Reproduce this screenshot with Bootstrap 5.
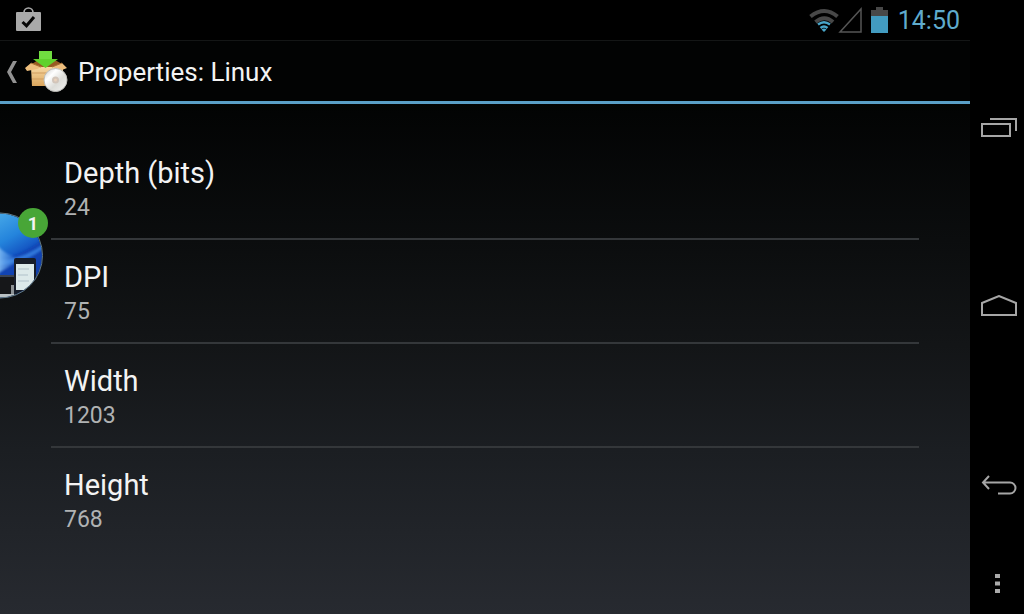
<!DOCTYPE html>
<html lang="en">
<head>
<meta charset="utf-8">
<meta name="viewport" content="width=device-width, initial-scale=1">
<title>Properties: Linux</title>
<link href="https://cdn.jsdelivr.net/npm/bootstrap@5.3.0/dist/css/bootstrap.min.css" rel="stylesheet">
<style>
  body { background: #000; color: #f3f3f3; font-family: Roboto, "Noto Sans", sans-serif; }
  svg { display: block; flex: none; }
  .screen { background: linear-gradient(#000 0, #020303 100px, #0b0d0e 240px, #131517 345px, #1b1e22 450px, #272a30 100%); }
  .status-bar { height: 40px; background: #000; padding: 0 10px 0 16px; }
  .clock { font-size: 25px; line-height: 32px; padding-top: 2px; color: #5fabcd; margin-left: 9px; }
  .app-bar { height: 64px; padding-top: 2px; border-top: 1px solid #141616; border-bottom: 3px solid #5a9fc8; background: #020303; }
  .app-bar h1 { font-size: 26px; line-height: 32px; font-weight: 400; margin-left: 10px; }
  .up { margin-left: 6px; gap: 7px; }
  .settings { padding: 32px 51px 0; }
  .setting { height: 104px; padding: 19px 13px 0; border-bottom: 2px solid #34373a; }
  .setting:last-child { border-bottom: 0; }
  .setting dt { font-size: 29px; line-height: 36px; font-weight: 400; }
  .setting dd { font-size: 23px; line-height: 34px; color: #b0b2b3; }
  .nav-keys { width: 54px; padding-top: 38px; }
  .key { background: none; border: 0; padding: 0 0 0 4px; }
  .menu-key { height: 40px; padding-left: 2px; }
  .bubble { left: 0; top: 208px; width: 48px; height: 92px; }
  .count { right: 0; top: 0; width: 30px; height: 30px; background: #48a637; font-size: 18px; line-height: 32px; font-weight: 700; }
</style>
</head>
<body>
<div class="d-flex min-vh-100 position-relative">
  <div class="screen flex-grow-1 d-flex flex-column">
    <header>
      <div class="status-bar d-flex align-items-center justify-content-between">
        <svg width="25" height="26" viewBox="0 0 25 26" role="img" aria-label="App installed">
          <path d="M8 7V5.500a4.500 4.500 0 0 1 9 0V7" fill="none" stroke="#aaa" stroke-width="1.700"/>
          <rect y="5" width="25" height="19" rx="1" fill="#a9a9a9"/>
          <path d="M6.500 15l4 3.800L18 10" fill="none" stroke="#050505" stroke-width="3"/>
        </svg>
        <div class="d-flex align-items-center">
          <svg width="80" height="28" viewBox="0 0 80 28" role="img" aria-label="Wi-Fi, signal and battery">
            <g fill="none" stroke="#484848" stroke-width="4">
              <path d="M1.500 10.500q14-11 27 0M6.500 16q9-7.500 17.500 0"/>
            </g>
            <path d="M9 18.500q6-4.500 12 0M11.500 22q3.500-3 7 0" fill="none" stroke="#48a5c8" stroke-width="2.500"/>
            <path d="M12.500 23.500q2.500-2 5 0L15 26z" fill="#48a5c8"/>
            <path d="M31 26L52 3v23z" fill="none" stroke="#555" stroke-width="1.500"/>
            <path d="M62 4h5V1h7v3h5v7H62z" fill="#484848"/>
            <rect x="62" y="10" width="17" height="17" fill="#429bc0"/>
          </svg>
          <time class="clock">14:50</time>
        </div>
      </div>
      <div class="app-bar d-flex align-items-center">
        <a href="#" class="up d-flex align-items-center" aria-label="Navigate up">
          <svg width="12" height="24" viewBox="0 0 12 24"><path d="M7 1h4L5 12l6 11H7L1 12z" fill="#929292"/></svg>
          <svg width="43" height="44" viewBox="0 0 43 44">
            <defs>
              <linearGradient id="box" x2="0" y2="1"><stop stop-color="#f7d7a2"/><stop offset="1" stop-color="#dba65d"/></linearGradient>
              <linearGradient id="disc" x2="1" y2="1"><stop stop-color="#c4c4c4"/><stop offset=".3" stop-color="#fff"/><stop offset=".6" stop-color="#dcdcd8"/><stop offset="1" stop-color="#f4f4f4"/></linearGradient>
            </defs>
            <path d="M7 14L13 10H30L37 14V20H7z" fill="#985a22"/>
            <path d="M6 17H38V34L34 36H7z" fill="url(#box)"/>
            <path d="M7 23H37M7 29H34" stroke="#cf9c60" stroke-width="1"/>
            <path d="M6 13L0 18L2 21L12 19L17 17zM37 13L42 18L37 20L27 17z" fill="#edbe7d"/>
            <path d="M6 13L16 17M37 13L27 17" stroke="#a66c31"/>
            <path d="M14 1H27V9H33L20.500 18L8 9H14z" fill="#5fd22d"/>
            <path d="M14 1H27V9H14z" fill="#82e954" opacity=".5"/>
            <circle cx="30.500" cy="30" r="11.500" fill="url(#disc)" stroke="#bdbdb9"/>
            <circle cx="30.500" cy="30" r="3.500" fill="#d2c5ba"/><circle cx="30.500" cy="30" r="1.500" fill="#ead3bd"/>
          </svg>
        </a>
        <h1 class="mb-0">Properties: Linux</h1>
      </div>
    </header>
    <main class="settings">
      <dl class="mb-0">
        <div class="setting"><dt>Depth (bits)</dt><dd class="mb-0">24</dd></div>
        <div class="setting"><dt>DPI</dt><dd class="mb-0">75</dd></div>
        <div class="setting"><dt>Width</dt><dd class="mb-0">1203</dd></div>
        <div class="setting"><dt>Height</dt><dd class="mb-0">768</dd></div>
      </dl>
    </main>
  </div>

  <nav class="nav-keys d-flex flex-column flex-shrink-0" aria-label="System keys">
    <button class="key flex-fill d-flex align-items-center justify-content-center" aria-label="Recent apps">
      <svg width="36" height="20" viewBox="0 0 36 20" fill="none" stroke="#a6a6a6" stroke-width="2"><path d="M1 7h28v12H1zM9 2h26v12"/></svg>
    </button>
    <button class="key flex-fill d-flex align-items-center justify-content-center" aria-label="Home">
      <svg width="36" height="22" viewBox="0 0 36 22" fill="none" stroke="#a6a6a6" stroke-width="2"><path d="M1 20V8L18 1l17 7v12z"/></svg>
    </button>
    <button class="key flex-fill d-flex align-items-center justify-content-center" aria-label="Back">
      <svg width="36" height="20" viewBox="0 0 36 20" fill="none" stroke="#a6a6a6" stroke-width="2"><path d="M8 1L2 7.500 8 14M2 7.500H29a5.500 5.500 0 0 1 0 11H17"/></svg>
    </button>
    <button class="key menu-key d-flex align-items-start justify-content-center" aria-label="Menu">
      <svg width="6" height="20" viewBox="0 0 6 20" fill="#aaa"><path d="M0 0h5v4H0zM0 7.500h5v4H0zM0 15h5v4H0z"/></svg>
    </button>
  </nav>

  <div class="bubble position-absolute">
    <svg width="48" height="92" viewBox="0 0 48 92" role="img" aria-label="Remote desktop">
      <defs>
        <clipPath id="round"><circle cx="0" cy="47.500" r="42"/></clipPath>
        <linearGradient id="sky" x2=".3" y2="1"><stop stop-color="#4badea"/><stop offset=".35" stop-color="#2484dc"/><stop offset=".55" stop-color="#1558c4"/><stop offset="1" stop-color="#082f90"/></linearGradient>
        <linearGradient id="ray" x2="1"><stop stop-color="#8cc4f6"/><stop offset="1" stop-color="#2f7de0" stop-opacity="0"/></linearGradient>
        <filter id="soft"><feGaussianBlur stdDeviation="1"/></filter>
      </defs>
      <g clip-path="url(#round)">
        <path d="M0 0h48v92H0z" fill="url(#sky)"/>
        <g filter="url(#soft)">
          <path d="M12 48Q30 42 44 30V92H0V56z" fill="#0c3fb0" opacity=".7"/>
          <path d="M-4 52Q20 53 44 36V40Q24 56-4 58z" fill="#3f8deb" opacity=".7"/>
          <path d="M-4 36Q6 48 22 51L-4 66z" fill="url(#ray)"/>
        </g>
        <path d="M0 68h14v20H0z" fill="#161719"/>
        <path d="M0 67h14v2H0z" fill="#3b4454"/>
        <path d="M0 86h16v6H0z" fill="#bac1c4"/>
        <rect x="11" y="77" width="3" height="9" fill="#8d9295"/>
        <rect x="14" y="50" width="22" height="40" rx="2" fill="#171d29"/>
        <path d="M16 56h18v26H16z" fill="#dce9ea"/>
        <path d="M18 61h11M18 67h10M18 73h11" stroke="#c6d5da" stroke-width="2"/>
      </g>
      <circle cx="0" cy="47.500" r="42.500" fill="none" stroke="#617987"/>
    </svg>
    <span class="count position-absolute rounded-circle text-center">1</span>
  </div>
</div>
<script src="https://cdn.jsdelivr.net/npm/bootstrap@5.3.0/dist/js/bootstrap.bundle.min.js"></script>
</body>
</html>
